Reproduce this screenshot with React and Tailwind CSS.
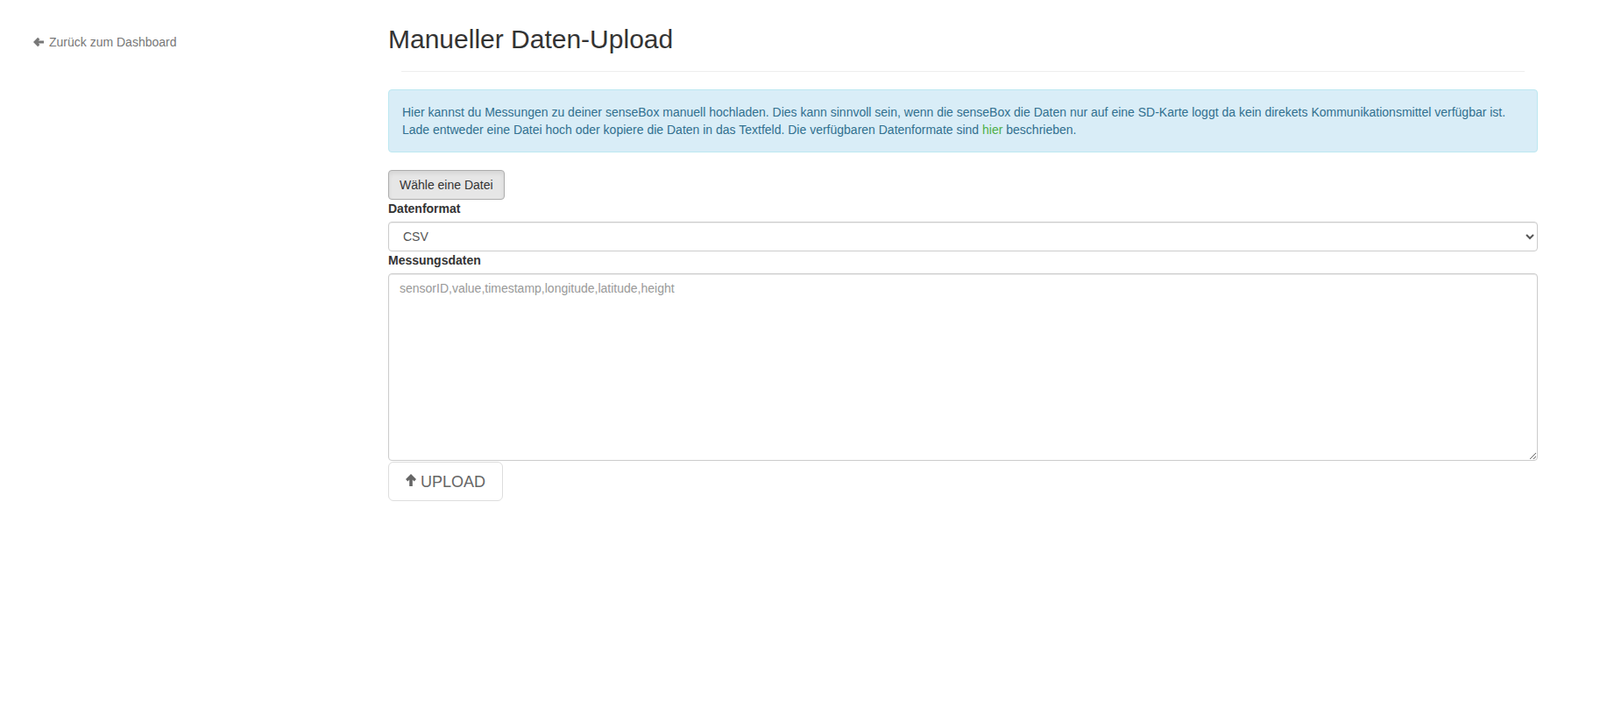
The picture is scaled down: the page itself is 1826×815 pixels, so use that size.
import React, { useState } from 'react';

const ArrowLeft = ({ className }) => (
  <svg viewBox="0 0 12 12" className={className} fill="currentColor">
    <path d="M0 6 L5.2 0.8 L7.4 3 L5.8 4.4 H12 V7.6 H5.8 L7.4 9 L5.2 11.2 Z" />
  </svg>
);

const ArrowUp = ({ className }) => (
  <svg viewBox="0 0 12 14" className={className} fill="currentColor">
    <path d="M6 0 L12 6 L9.6 8.4 L7.8 6.6 V14 H4.2 V6.6 L2.4 8.4 L0 6 Z" />
  </svg>
);

const App = () => {
  const [format, setFormat] = useState('csv');
  const [data, setData] = useState('');

  return (
    <div className="min-h-screen bg-white text-[14px] leading-[20px] text-[#333] font-['Liberation_Sans',Arial,sans-serif] flex">
      <div className="w-[443px] shrink-0 pt-[38px] pl-[38px]">
        <a href="#" className="flex items-center gap-[6px] text-[#777] hover:underline">
          <ArrowLeft className="w-[12px] h-[12px]" />
          <span>Zurück zum Dashboard</span>
        </a>
      </div>

      <div className="w-[1312px] shrink-0 pt-[28px]">
        <h1 className="text-[30px] leading-[33px] font-normal text-[#333]">Manueller Daten-Upload</h1>
        <hr className="mx-[15px] my-[20px] border-0 border-t border-[#eee]" />

        <div className="bg-[#d9edf7] border border-[#bce8f1] rounded-[4px] p-[15px] text-[#31708f] mb-[20px]">
          Hier kannst du Messungen zu deiner senseBox manuell hochladen. Dies kann sinnvoll sein, wenn die senseBox die Daten nur auf eine SD-Karte loggt da kein direkets Kommunikationsmittel verfügbar ist.
          <br />
          Lade entweder eine Datei hoch oder kopiere die Daten in das Textfeld. Die verfügbaren Datenformate sind{' '}
          <a href="#" className="text-[#4eaf47]">hier</a> beschrieben.
        </div>

        <button className="h-[34px] px-[12px] bg-[#e6e6e6] border border-[#adadad] rounded-[4px] text-[#333] shadow-[inset_0_3px_5px_rgba(0,0,0,0.08)]">
          Wähle eine Datei
        </button>

        <label className="block font-bold mb-[5px]">Datenformat</label>
        <select
          value={format}
          onChange={(e) => setFormat(e.target.value)}
          className="block w-full h-[34px] px-[12px] border border-[#ccc] rounded-[4px] bg-white text-[#555] shadow-[inset_0_1px_1px_rgba(0,0,0,0.075)]"
        >
          <option value="csv">CSV</option>
          <option value="json">JSON</option>
        </select>

        <label className="block font-bold mb-[5px]">Messungsdaten</label>
        <textarea
          value={data}
          onChange={(e) => setData(e.target.value)}
          placeholder="sensorID,value,timestamp,longitude,latitude,height"
          className="block w-full h-[214px] px-[12px] py-[6px] border border-[#ccc] rounded-[4px] bg-white text-[#555] placeholder:text-[#999] shadow-[inset_0_1px_1px_rgba(0,0,0,0.075)] outline-none"
        />

        <button className="mt-[1px] h-[45px] px-[19px] flex items-center gap-[5px] border border-[#ddd] rounded-[6px] bg-white text-[#666] text-[18px]">
          <ArrowUp className="w-[12px] h-[14px] -mt-[3px]" />
          <span>UPLOAD</span>
        </button>
      </div>
    </div>
  );
};

export default App;
